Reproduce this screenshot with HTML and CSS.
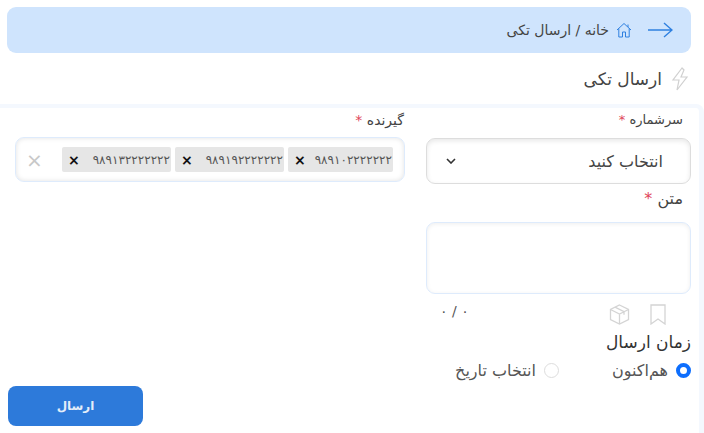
FILE: index.html
```html
<!DOCTYPE html>
<html lang="fa" dir="rtl">
<head>
<meta charset="utf-8">
<title>ارسال تکی</title>
<link rel="stylesheet" href="styles.css">
</head>
<body>
<nav class="crumb">
  <svg class="back" width="26" height="16" viewBox="0 0 26 16" fill="none" stroke="#2f80e0" stroke-width="1.4"><path d="M1 8h24M17 1l8 7-8 7"/></svg>
  <svg class="home" width="16" height="16" viewBox="0 0 16 16" fill="none" stroke="#2f80e0" stroke-width="1"><path d="M1 8l7-6.500L15 8M2.800 6.500V15h3.700v-5h3v5h3.700V6.500M12 2.500v2.500"/></svg>
  <span>خانه / ارسال تکی</span>
</nav>
<h1 class="title">
  <svg width="18" height="24" viewBox="0 0 18 24" fill="none" stroke="#d0d0d0" stroke-width="1.200"><path d="M11 1L2 13h6l-2 10 10-13h-6l3-7z"/></svg>
  <span>ارسال تکی</span>
</h1>
<main class="card">
  <div class="row top">
    <div class="field right">
      <label class="label">سرشماره <i>*</i></label>
      <div class="select">
        <span>انتخاب کنید</span>
        <svg width="10" height="6" viewBox="0 0 10 6" fill="none" stroke="#333" stroke-width="1.600"><path d="M1 1l4 4 4-4"/></svg>
      </div>
    </div>
    <div class="field left">
      <label class="label">گیرنده <i>*</i></label>
      <div class="tags">
        <span class="tag first"><span>۹۸۹۱۰۲۲۲۲۲۲۲</span><b>×</b></span>
        <span class="tag"><span>۹۸۹۱۹۲۲۲۲۲۲۲</span><b>×</b></span>
        <span class="tag"><span>۹۸۹۱۳۲۲۲۲۲۲۲</span><b>×</b></span>
        <span class="clear">×</span>
      </div>
    </div>
  </div>
  <div class="narrow">
    <label class="label big">متن <i>*</i></label>
    <div class="textarea"></div>
    <div class="tools">
      <svg width="16" height="21" viewBox="0 0 16 21" fill="none" stroke="#d4d4d4" stroke-width="1.300"><path d="M1 1h14v19l-7-5-7 5z"/></svg>
      <svg width="21" height="21" viewBox="0 0 21 21" fill="none" stroke="#d4d4d4" stroke-width="1.300"><path d="M10.500 1l9 4.500v10l-9 4.500-9-4.500v-10zM1.500 5.500l9 4.500 9-4.500M10.500 10v10M6 3.200l9 4.500v3"/></svg>
      <span class="count">۰ / ۰</span>
    </div>
    <div class="when">زمان ارسال</div>
    <div class="radios">
      <span class="radio"><span class="dot on"></span>هم‌اکنون</span>
      <span class="radio"><span class="dot"></span>انتخاب تاریخ</span>
    </div>
  </div>
  <div class="actions"><button class="send">ارسال</button></div>
</main>
</body>
</html>
```
FILE: styles.css
```css
* { box-sizing: border-box; }
html, body { margin: 0; height: 433px; overflow: hidden; }
body {
  background: #fff;
  font-family: "DejaVu Sans", sans-serif;
  color: #444;
  padding-top: 7px;
}
.crumb {
  margin: 0 13px 0 7px;
  height: 46px;
  background: #cfe4fd;
  border-radius: 9px;
  display: flex;
  align-items: center;
  padding-right: 18px;
  font-size: 14px;
  color: #444;
}
.crumb .back { margin-left: 15px; }
.crumb .home { margin-left: 7px; }
.title {
  margin: 0;
  height: 51px;
  padding: 0 15px 0 0;
  display: flex;
  align-items: center;
  gap: 9px;
  font-size: 17px;
  font-weight: 400;
  color: #444;
}
.card {
  height: 329px;
  background: #fff;
  border-right: 5px solid #f4f8fe;
  border-top: 4px solid #f4f8fe;
  border-radius: 0 8px 0 0;
  padding: 0 8px 0 8px;
  display: flex;
  flex-direction: column;
}
.row { display: flex; gap: 21px; padding: 0 0 0 8px; }
.field.right { width: 265px; flex: none; }
.field.left { width: 390px; flex: none; }
.label { display: block; font-size: 13px; line-height: 20px; padding: 2px 8px 0 0; height: 30px; color: #444; }
.left .label { padding-right: 1px; font-size: 14px; }
.label i { color: #e0455a; font-style: normal; }
.label.big { font-size: 16px; height: 30px; margin-top: 3px; }
.select {
  height: 46px;
  border: 1px solid #ddd;
  border-radius: 9px;
  display: flex;
  align-items: center;
  justify-content: space-between;
  padding: 0 27px 0 19px;
  font-size: 16px;
  box-shadow: inset 0 2px 5px #e8e8e8;
}
.tags {
  height: 45px;
  margin-top: -1px;
  border: 1px solid #deebfc;
  border-radius: 9px;
  display: flex;
  align-items: center;
  gap: 4px;
  padding: 0 11px 0 10px;
  box-shadow: inset 0 0 5px #e2e2e2;
}
.tag {
  width: 109px;
  height: 25px;
  background: #e6e6e6;
  border-radius: 2px;
  display: flex;
  align-items: center;
  justify-content: space-between;
  padding: 0 1px 0 6px;
  font-size: 12px;
  letter-spacing: -0.2px;
  color: #555;
}
.tag.first { width: 105px; }
.tag b { color: #111; font-size: 14px; }
.clear { margin-right: auto; color: #c8c8c8; font-size: 20px; }
.narrow { width: 265px; }
.textarea {
  height: 72px;
  border: 1px solid #deebfc;
  border-radius: 9px;
  box-shadow: inset 0 1px 4px #eee;
  margin-top: 5px;
}
.tools { display: flex; align-items: center; gap: 20px; height: 42px; padding-right: 25px; padding-bottom: 2px; }
.count { margin-right: auto; font-size: 14px; color: #555; margin-left: 14px; margin-top: -6px; }
.when { font-size: 17px; color: #333; height: 28px; line-height: 24px; margin-top: -6px; }
.radios { display: flex; gap: 53px; font-size: 16px; height: 24px; align-items: center; }
.radio { display: flex; align-items: center; gap: 8px; color: #555; }
.dot { width: 15px; height: 15px; border-radius: 50%; border: 1px solid #ddd; background: #fff; }
.dot.on { border: 4px solid #0d6efd; }
.actions { margin-top: 4px; }
.send {
  display: block;
  width: 135px;
  height: 40px;
  border: 0;
  border-radius: 8px;
  background: #2d7ada;
  color: #e3edf9;
  font: 700 12px "DejaVu Sans", sans-serif;
  margin-right: auto;
}
```
